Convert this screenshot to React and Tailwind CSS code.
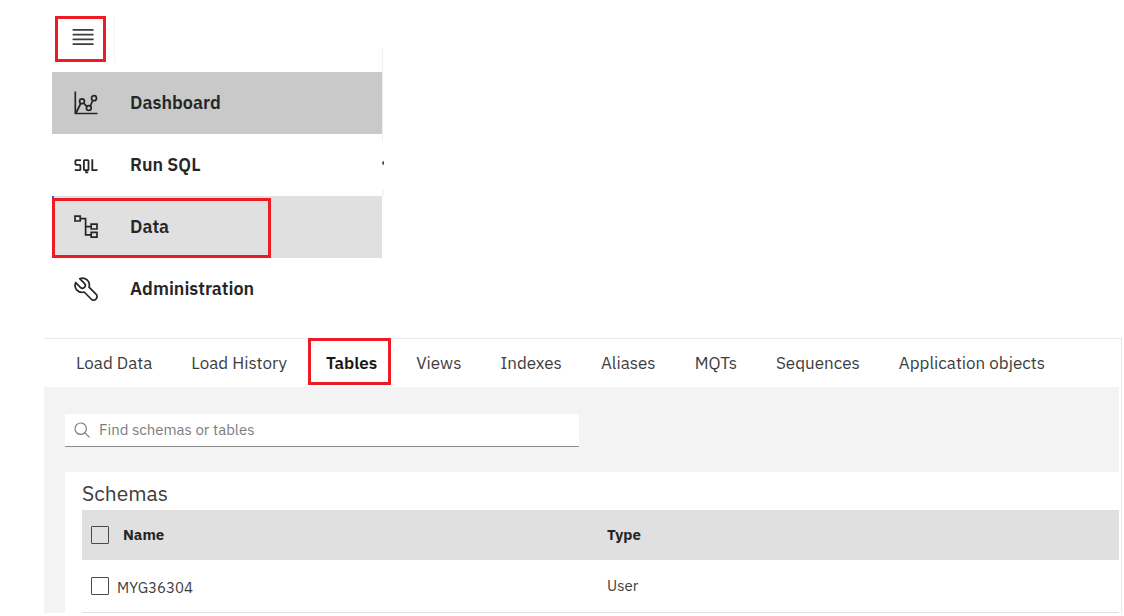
import React from "react";

const stroke = {
  fill: "none",
  stroke: "currentColor",
  strokeLinejoin: "round",
};

function MenuIcon() {
  return (
    <svg className="h-5 w-[22px]" viewBox="0 0 22 20" {...stroke} strokeWidth="1.7" strokeLinecap="round" aria-hidden="true">
      <path d="M1.3 2.9h19.6M1.3 7.6h19.6M1.3 12.4h19.6M1.3 17.1h19.6" />
    </svg>
  );
}

function ChartIcon() {
  return (
    <svg className="size-6" viewBox="0 0 24 24" {...stroke} strokeWidth="1.7" aria-hidden="true">
      <path d="M1.3.5v22h22.2M2 22 7 12M9.3 11.9l3.7 3.7M16.3 14.9l2.5-5.4" />
      <circle cx="8" cy="10.2" r="2.4" />
      <circle cx="14.8" cy="17" r="2.4" />
      <circle cx="20" cy="7.2" r="2.5" />
    </svg>
  );
}

function SqlIcon() {
  return (
    <svg className="size-6" viewBox="0 0 24 24" {...stroke} strokeLinejoin="miter" strokeWidth="1.8" aria-hidden="true">
      <path d="M6.9 7.2H2.2a.8.8 0 0 0-.8.8v3.1c0 .5.3.8.8.8h3.4c.5 0 .8.3.8.8v3.7c0 .5-.3.8-.8.8H.8" />
      <path d="M10.7 7.2h3c.5 0 .8.3.8.8v8.4c0 .5-.3.8-.8.8h-3c-.5 0-.8-.3-.8-.8V8c0-.5.3-.8.8-.8zM12.2 17.2v2.1h2M18.3 6.3v10.9h5.2" />
    </svg>
  );
}

function TreeIcon() {
  return (
    <svg className="size-6" viewBox="0 0 24 24" {...stroke} strokeLinejoin="miter" strokeWidth="1.7" aria-hidden="true">
      <path d="M1 1.2h5.2v4.8H1zM17.2 9.2H23v4.8h-5.8zM17.2 17.4H23v4.8h-5.8zM6.2 3.6h5.4v16.2h5.6M11.6 11.6h5.6" />
    </svg>
  );
}

function WrenchIcon() {
  return (
    <svg className="size-6" viewBox="0 0 24 24" {...stroke} strokeWidth="1.7" aria-hidden="true">
      <path d="M5.7 1.7l4.7 4.7a2.8 2.8 0 0 1-4 4L1.7 5.7A6.9 6.9 0 0 0 10.2 15l6.9 7a3.1 3.1 0 0 0 4.9 0 3.2 3.2 0 0 0 0-4.8L15 10.2A6.9 6.9 0 0 0 5.7 1.7z" />
    </svg>
  );
}

function SearchIcon() {
  return (
    <svg className="size-4 shrink-0 text-[#7c7c7c]" viewBox="0 0 16 16" {...stroke} strokeWidth="1.2" aria-hidden="true">
      <circle cx="6.7" cy="6.7" r="5.7" />
      <path d="m10.9 10.9 4.7 4.5" />
    </svg>
  );
}

const menu = [
  { label: "Dashboard", Icon: ChartIcon, tone: "bg-[#c9c9c9]" },
  { label: "Run SQL", Icon: SqlIcon, tone: "bg-white" },
  { label: "Data", Icon: TreeIcon, tone: "bg-[#e0e0e0]", marked: true },
  { label: "Administration", Icon: WrenchIcon, tone: "bg-white" },
];

const tabs = [
  "Load Data",
  "Load History",
  "Tables",
  "Views",
  "Indexes",
  "Aliases",
  "MQTs",
  "Sequences",
  "Application objects",
];

function Checkbox({ label }) {
  return (
    <input
      type="checkbox"
      aria-label={label}
      className="block size-[18px] shrink-0 appearance-none rounded-[1px] border border-[#4a4a4a] checked:bg-[#161616]"
    />
  );
}

export default function App() {
  return (
    <div className="bg-white pt-4 font-['IBM_Plex_Sans',Roboto,sans-serif] text-[#3d3d3d]">
      <header className="ml-[55px] flex w-[60px] justify-between border-r border-[#f4f4f4]">
        <button
          type="button"
          aria-label="Open menu"
          className="flex h-[46px] w-[51px] items-center justify-center border-3 border-[#ed1c24] pb-1 pl-1"
        >
          <MenuIcon />
        </button>
      </header>

      <nav aria-label="Main" className="relative mt-[10px] ml-[52px] w-[330px]">
        <span className="absolute -top-6 left-full h-[94px] w-px bg-[#f0f0f0]" />
        <span className="absolute top-[89px] left-full h-1 w-[2px] rounded-l-full bg-[#555555]" />
        <span className="absolute top-[118px] left-full h-[6px] w-[2px] bg-[#edf5ff]" />
        <ul>
          {menu.map(({ label, Icon, tone, marked }) => (
            <li key={label} className={`relative ${tone}`}>
              <a
                href={`#${label}`}
                className="flex h-[62px] items-center gap-8 pl-[22px] text-lg font-semibold text-[#262626]"
              >
                <Icon />
                {label}
              </a>
              {marked && (
                <>
                  <span className="absolute top-0 left-0 h-[3px] w-[2px] bg-[#0f62fe]" />
                  <span className="pointer-events-none absolute top-[2px] bottom-0 left-0 w-[219px] border-3 border-[#ed1c24]" />
                </>
              )}
            </li>
          ))}
        </ul>
      </nav>

      <main className="mt-[18px] mr-[2px] ml-11 border-t border-r border-[#e6e8ef]">
        <div role="tablist" className="flex h-12 items-stretch gap-[39px] pl-8">
          {tabs.map((tab) => {
            const active = tab === "Tables";
            return (
              <button
                key={tab}
                type="button"
                role="tab"
                aria-selected={active}
                className={`relative pt-px whitespace-nowrap text-[17px] ${active ? "font-semibold text-[#161616]" : ""}`}
              >
                {tab}
                {active && (
                  <span className="pointer-events-none absolute -top-px -right-[14px] bottom-[2px] -left-[18px] border-3 border-[#ed1c24]" />
                )}
              </button>
            );
          })}
        </div>

        <div className="mr-[2px] bg-[#f3f3f3] pt-[27px] pl-[21px]">
          <label className="flex h-[33px] w-[514px] items-center gap-[9px] border-b border-[#8d8d8d] bg-white pl-[9px]">
            <SearchIcon />
            <input
              type="search"
              aria-label="Find schemas or tables"
              placeholder="Find schemas or tables"
              className="min-w-0 flex-1 bg-transparent text-[15px] outline-none placeholder:text-[#7c7c7c]"
            />
          </label>

          <section className="mt-[25px] bg-white pt-[7px] pl-[17px]">
            <h2 className="h-[31px] text-[21px] leading-7">Schemas</h2>
            <table className="w-full table-fixed border-collapse text-left text-[15px]">
              <thead>
                <tr className="h-[50px] bg-[#e0e0e0] text-[#262626]">
                  <th className="w-[525px] pl-[9px] font-bold">
                    <span className="flex items-center gap-[14px]">
                      <Checkbox label="Select all schemas" />
                      Name
                    </span>
                  </th>
                  <th className="font-bold">Type</th>
                </tr>
              </thead>
              <tbody>
                <tr className="h-[52px] border-b border-[#e0e0e0]">
                  <td className="pl-[9px]">
                    <span className="flex items-center gap-2">
                      <Checkbox label="Select MYG36304" />
                      <span className="pt-1">MYG36304</span>
                    </span>
                  </td>
                  <td>User</td>
                </tr>
              </tbody>
            </table>
          </section>
        </div>
      </main>
    </div>
  );
}
